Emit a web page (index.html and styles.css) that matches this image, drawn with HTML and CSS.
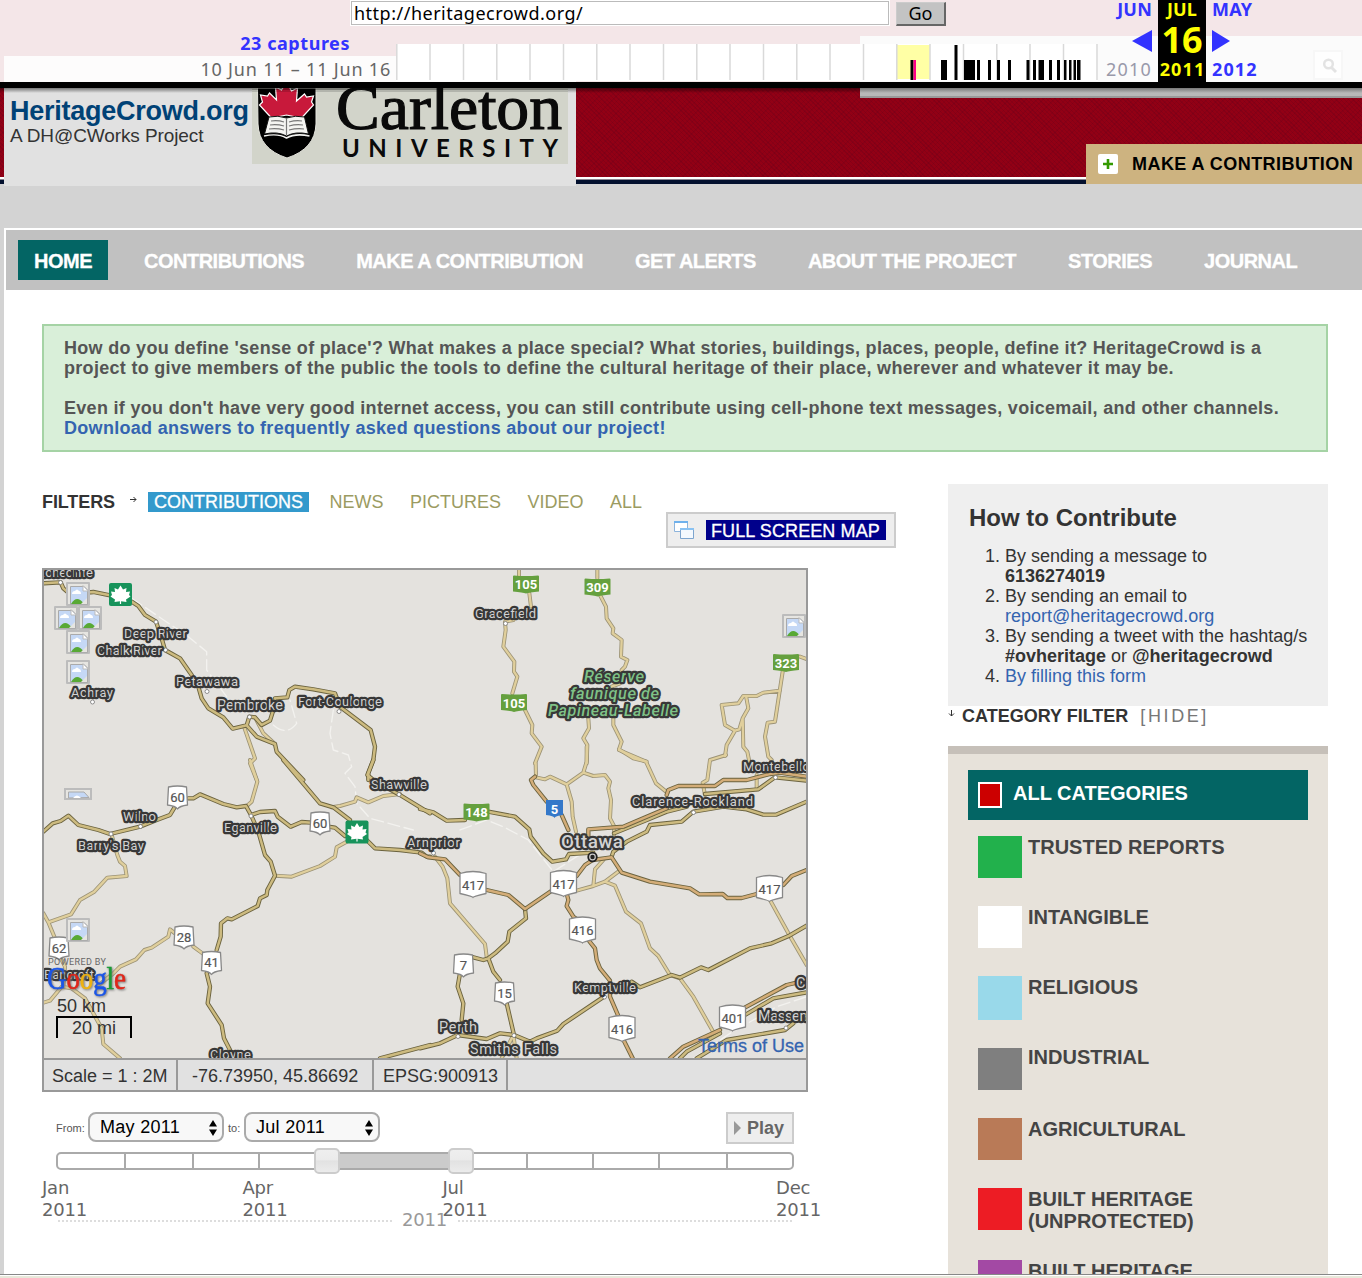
FILE: index.html
```html
<!DOCTYPE html>
<html lang="en">
<head>
<meta charset="utf-8">
<title>HeritageCrowd.org</title>
<link rel="stylesheet" href="styles.css">
</head>
<body>
<div class="archive-bar">
  <div class="archive-main">
    <form class="archive-form"><div class="url-box"><span class="url-text">http://heritagecrowd.org/</span></div><div class="go">Go</div></form>
    <div class="archive-row">
      <div class="captures"><b>23 captures</b><span>10 Jun 11 – 11 Jun 16</span></div>
      <svg class="spark" width="702" height="38" viewBox="396 44 702 38">
        <rect x="396" y="44" width="702" height="37" fill="#fff"/>
        <rect x="897" y="45" width="33" height="34" fill="#ffffa5"/>
        <path stroke="#d9d9d9" stroke-width="1.5" d="M396.8 44v36M430 44v36M463.5 44v36M496.8 44v36M530 44v36M563.5 44v36M596.8 44v36M630 44v36M663.5 44v36M696.8 44v36M730 44v36M763.5 44v36M796.8 44v36M830 44v36M863.5 44v36M896.8 44v36M930 44v36M963.5 44v36M996.8 44v36M1030 44v36M1063.5 44v36M1097 44v36"/>
        <path fill="#000" d="M910.500 60h3v20h-3zM941 60h6v20h-6zM954.500 45h3v35h-3zM964 60h11v20h-11zM977 60h3v20h-3zM988 60h3v20h-3zM997 60h3v20h-3zM1008 60h3v20h-3zM1026.500 60h3v20h-3zM1033 60h3v20h-3zM1038.500 60h5.500v20h-5.500zM1049 60h3v20h-3zM1057 60h3v20h-3zM1064 60h2.500v20h-2.500zM1069 60h2.500v20h-2.500zM1073.500 60h2.500v20h-2.500zM1077 60h3.500v20h-3.500z"/>
        <path fill="#f08" d="M913.500 60h2.500v20h-2.500z"/>
      </svg>
    </div>
  </div>
  <div class="dates">
    <div class="date prev"><b>JUN</b><svg width="20" height="22" viewBox="0 0 20 22"><path d="M20 0v22L0 11z" fill="#33f"/></svg><span>2010</span></div>
    <div class="date now"><b>JUL</b><strong>16</strong><b>2011</b></div>
    <div class="date next"><b>MAY</b><svg width="18" height="22" viewBox="0 0 18 22"><path d="M0 0v22l18-11z" fill="#33f"/></svg><b>2012</b></div>
    <div class="ghost-search"><svg width="16" height="16" viewBox="0 0 16 16"><circle cx="6.500" cy="6" r="4.300" fill="none" stroke="#e3e3e3" stroke-width="2.500"/><path d="M9.500 9.500L14 14" stroke="#e3e3e3" stroke-width="3"/></svg></div>
  </div>
</div>

<header class="banner">
  <div class="brand">
    <div class="brand-text"><h1>HeritageCrowd.org</h1><p>A DH@CWorks Project</p></div>
    <svg class="logo" width="316" height="76" viewBox="252 88 316 76">
      <rect x="252" y="88" width="316" height="76" fill="#d2d4ca"/>
      <path d="M257.500 88H316v36q-1 25-29 34-28-9-29-34z" fill="#000" stroke="#e6e6df" stroke-width="1"/>
      <path d="M286.500 82l5 9 6-3-1 13 8-7 2 3 7-1-2 6 2 3-12 13-15-3-15 3-12-13 3-3-2-7 7 1 2-3 7 7-1-13 6 3z" fill="#c8193b" stroke="#fff" stroke-width="1.200"/>
      <path d="M269 117q9-2 17.500 1 9-3 18-1l4 17q-13-3-22 2-9-5-22-2z" fill="#f4f4f1" stroke="#111" stroke-width="1"/>
      <path d="M264 136q14-3 22.500 2 9-5 23-2" fill="none" stroke="#f4f4f1" stroke-width="1.500"/>
      <path d="M286.500 118v17M271 121q7-1 13 1M270 125q7-1 14 1M269 129q8-1 15 1M289 122q7-2 13-1M289 126q7-2 14-1M289 130q8-2 15-1" fill="none" stroke="#777" stroke-width="1.200"/>
      <text class="logo-name" x="336" y="129" textLength="226" lengthAdjust="spacingAndGlyphs">Carleton</text>
      <text class="logo-univ" x="342" y="157" textLength="216">UNIVERSITY</text>
      <path d="M252 88h316v2H252z" opacity=".4"/><path d="M252 90h316v2H252z" opacity=".15"/>
    </svg>
  </div>
  <div class="searchbar"></div>
  <a class="contribute">
    <svg width="20" height="20" viewBox="0 0 20 20"><rect width="20" height="20" rx="2" fill="#fff"/><path d="M10 5v10M5 10h10" stroke="#390" stroke-width="2.600"/></svg>
    <span>MAKE A CONTRIBUTION</span>
  </a>
</header>

<div class="page">
  <nav><a class="on">HOME</a><a>CONTRIBUTIONS</a><a>MAKE A CONTRIBUTION</a><a>GET ALERTS</a><a>ABOUT THE PROJECT</a><a>STORIES</a><a>JOURNAL</a></nav>
  <div class="notice">
    <p>How do you define 'sense of place'? What makes a place special? What stories, buildings, places, people, define it? HeritageCrowd is a<br>project to give members of the public the tools to define the cultural heritage of their place, wherever and whatever it may be.</p>
    <p>Even if you don't have very good internet access, you can still contribute using cell-phone text messages, voicemail, and other channels.<br><a>Download answers to frequently asked questions about our project!</a></p>
  </div>
  <div class="columns">
    <main>
      <div class="filters">
        <strong>FILTERS</strong>
        <svg width="7" height="7" viewBox="0 0 7 7"><path d="M0 3.500h6M3.500 1L6 3.500 3.500 6" fill="none" stroke="#333"/></svg>
        <a class="on">CONTRIBUTIONS</a><a>NEWS</a><a>PICTURES</a><a>VIDEO</a><a>ALL</a>
      </div>
      <a class="fullscreen">
        <svg width="20" height="18" viewBox="0 0 20 18"><path d="M.5.500h13v10H.5z" fill="#fff" stroke="#8db4dc"/><path d="M0 0h14v2H0z" fill="#6fb1ec"/><path d="M6.500 7.500h13v10h-13z" fill="#f4f9fe" stroke="#7da5cf"/><path d="M6 7h14v2H6z" fill="#8ac2f2"/></svg>
        <span>FULL SCREEN MAP</span>
      </a>
      <div class="map">
        <svg class="canvas" width="762" height="488" viewBox="44 570 762 488">
          <defs>
            <g id="minor">
              <path transform="translate(30 470) scale(.33333)" d="M642 770L675 865 660 880 680 930M675 742L700 790 735 822"/>
              <path transform="translate(30 760) scale(.33333)" d="M660 0L682 65 665 125 648 140M735 347L785 350 870 318 915 290 920 262 950 245M905 142L930 138 975 125 980 112 1015 127 1060 108 1110 102M245 225L262 285 270 305 285 318 290 348 232 353 193 395 150 420 123 463 55 487 40 460M55 487L75 535M90 590L105 620 100 680M200 680L250 640 270 620 318 598 343 570 365 563 415 530 420 508 435 520M490 560L520 582M40 728L60 722 95 680 125 685 165 715 190 760 215 805 220 852 270 895"/>
              <path transform="translate(420 740) scale(.33333)" d="M347 70L348 112 375 118 390 110 440 133 490 98 500 65 500 20M490 98L520 108 555 105 570 125 565 145 573 180 570 235 583 260 582 285M440 133L455 185 458 230 468 275M597 30L678 65 708 130 742 158M918 45L870 60 862 120 848 128 855 165M1010 148V105M550 360L525 388 520 438M470 452L520 438 555 425 595 395M555 425L585 437 618 515 663 550 690 625 715 648 750 705 780 715 820 770 885 885M1050 480L1108 585 1160 675M45 350L68 380 82 415 90 490 195 612 200 650M280 885L290 955M280 885L245 955"/>
              <path transform="translate(420 480) scale(.33333)" d="M297 270V290M328 340L333 380M280 420L255 425 257 450 250 500 283 545 282 575 292 590 277 640M315 690L337 735 335 760 365 800 345 850M532 270V295M540 345L558 380 560 415 580 445 578 460 605 480 603 530 622 540 615 560 605 570 600 610 575 620M505 715L507 745 490 775 502 795 500 850M580 715V735L605 785 597 808 640 835 680 845M1140 530L1160 537M1088 575L1065 725 1043 728 1035 770 1045 830 1055 840M1080 632L1030 638 1010 648 970 648 955 670 905 675 915 735 945 752 920 795 915 828M945 752L958 748 968 715 985 685 978 648M968 715L970 800 982 815 988 845"/>
            </g>
            <g id="major">
              <path transform="translate(30 470) scale(.33333)" d="M40 340L92 337 100 355 120 372 150 370 190 366 240 376M305 395L325 408 345 435 378 455 395 505 405 540 450 565 485 615 505 650 515 685 535 715 580 742 608 776 650 766 658 740M650 766L680 800 735 822 740 845 820 930M658 740L675 742 695 765 720 752 730 720 735 685 772 682 778 660 795 650 850 658 915 670 930 710 1022 780 1035 830 1030 870 1015 910V930"/>
              <path transform="translate(30 760) scale(.33333)" d="M760 0L870 130 910 142 960 180M1010 240L1035 265 1110 270 1175 278 1190 290H1200M1030 0L1012 45 1030 60 1110 105 1200 160M40 215L68 190 92 183 115 167 145 195 205 210 240 222 330 200 380 180 420 165 435 140M475 115H490L510 103 580 132 620 142 648 138 663 165 685 215 705 285 722 305 735 347 712 390 710 405 690 415 683 438 605 478 592 475 573 490 572 530 560 570M540 620L530 640 540 680 533 730 575 795 582 835 605 880M663 165L690 156 735 153 743 170 782 200 815 186 845 188M895 200L915 203 945 228M1050 895L1200 855"/>
              <path transform="translate(420 740) scale(.33333)" d="M315 507L318 535 268 575 263 605 225 640 205 655 190 660 160 652M0 207L40 217 80 242 135 240M205 215L285 230 328 268 332 290 370 340 397 365 438 358 447 342 520 338M582 280L680 240 740 215 800 200M855 162L1015 148 1065 112 1160 122M575 350L580 335 620 305 680 275 690 255 785 245 820 215 910 200 980 208 1030 224H1068L1160 185M1160 557L1108 587 1055 610 990 625 865 690 843 682 780 713 755 705 660 742 635 725M205 655L220 695 240 720M260 790L282 885M120 700L113 740 130 790 125 840M0 925L60 910 113 885 200 897 240 880 282 885 330 905 350 895 412 872 430 852 552 770M780 955L800 935 900 880M830 955L920 900 1095 870 1120 850M975 825L1060 775 1160 757"/>
            </g>
            <g id="trunk">
              <path transform="translate(420 740) scale(.33333)" d="M0 340L25 352 75 358 120 405M200 450L265 465 315 507 395 452M470 408L495 375 518 360 575 352 605 398 690 425 810 445 838 463 908 462 922 474H965L1010 462M1090 435L1115 408 1160 390M440 460L445 480 440 498 460 530 470 537M505 600L525 625 530 660 540 685 570 722V770L598 835M608 895L638 955M345 110L333 120 340 135 380 185M425 225L445 270M505 290V268L610 260 740 205M740 165L745 150 775 138H885L910 120H980L1050 102 1080 98 1160 110M750 955L790 920 900 870M970 805L1100 735 1130 728"/>
            </g>
            <g id="shield3"><path d="M-13-11q13-4 26 0V9Q0 12 0 13 0 12-13 9z" fill="#fff" stroke="#888" stroke-width="1.300"/></g>
            <g id="shield2"><path d="M-9-10q9-2 18 0l1 18Q2 9 0 12-2 9-10 8z" fill="#fff" stroke="#888" stroke-width="1.300"/></g>
            <g id="green"><path d="M-13-8q0-1 1-1 12 1 24 0 1 0 1 1V7Q3 8 0 9-3 8-13 7z" fill="#65a03e"/></g>
            <g id="maple"><rect x="-11.500" y="-11.500" width="23" height="23" rx="2" fill="#17935b"/><path d="M0-9l2.500 4 3.500-1.500-.5 4 4-.5-1 3.500L10 2 5.500 5 6 7.500.6 6.800V9.500H-.6V6.800L-6 7.500-5.500 5-10 2-8.500.5-9.500-3l4 .5-.5-4L-2.500-5z" fill="#fff"/></g>
            <g id="missing"><path d="M1 1h22v22H1z" fill="#e6e5e1" stroke="#bcbcbc" stroke-width="2"/><path d="M4.500 22V4.500H18L21.500 8v14z" fill="#c5d8f5" stroke="#aaa"/><path d="M5 22q6-10 13 0z" fill="#58a935"/><path d="M15 22l6-6v6z" fill="#e6e5e1"/><path d="M6 12q0-3 3-3 2-3 4 0 2 0 2 3z" fill="#fff"/><path d="M17 4v5h5z" fill="#fff" stroke="#bbb"/></g>
          </defs>
          <rect x="44" y="570" width="762" height="488" fill="#e4e2de"/>
          <g class="border">
            <path transform="translate(30 470) scale(.33333)" d="M305 385L475 500 530 545V600L590 680M730 765Q770 800 800 760L780 690M910 720L900 790 910 840 955 855 965 890 945 910 975 950 980 1000 1020 1045 1150 1080"/>
            <path transform="translate(420 740) scale(.33333)" d="M120 270L200 240 250 260 325 300 400 395 470 350 520 325M820 955L930 880 1070 800 1160 770"/>
          </g>
          <use href="#minor" class="minor-case"/><use href="#minor" class="minor-fill"/>
          <use href="#major" class="major-case"/><use href="#major" class="major-fill"/>
          <use href="#trunk" class="major-case"/><use href="#trunk" class="trunk-fill"/>
          <g fill="#fff" stroke="#777" stroke-width=".8"><circle cx="60.500" cy="582.500" r="2"/><circle cx="156" cy="622" r="2"/><circle cx="165.500" cy="650" r="2"/><circle cx="207" cy="691.500" r="2"/><circle cx="249.500" cy="717" r="2"/><circle cx="339" cy="711.500" r="2"/><circle cx="92.500" cy="702" r="2"/><circle cx="505.500" cy="623.500" r="2"/><circle cx="399" cy="794.500" r="2"/><circle cx="251" cy="816" r="2"/><circle cx="140.500" cy="826.500" r="2"/><circle cx="111" cy="834" r="2"/><circle cx="433.500" cy="853" r="2"/><circle cx="693.500" cy="812.500" r="2"/><circle cx="775.500" cy="777.500" r="2"/><circle cx="604.500" cy="997" r="2"/><circle cx="458" cy="1036.500" r="2"/><circle cx="514" cy="1035.500" r="2"/><circle cx="786" cy="1028" r="2"/></g>
          <g class="towns">
            <text x="34" y="576.500" textLength="59">Stonecliffe</text>
            <text x="124" y="637.500" textLength="63">Deep River</text>
            <text x="97" y="655" textLength="65">Chalk River</text>
            <text x="176" y="686" textLength="62">Petawawa</text>
            <text x="217" y="710" textLength="66" class="mid">Pembroke</text>
            <text x="298" y="706" textLength="84">Fort-Coulonge</text>
            <text x="71" y="697" textLength="42">Achray</text>
            <text x="475" y="617.500" textLength="61">Gracefield</text>
            <text x="743" y="771" textLength="67">Montebello</text>
            <text x="371" y="789" textLength="56">Shawville</text>
            <text x="123" y="821" textLength="33">Wilno</text>
            <text x="224" y="831.500" textLength="53">Eganville</text>
            <text x="78" y="850" textLength="66">Barry's Bay</text>
            <text x="407" y="846.500" textLength="53">Arnprior</text>
            <text x="561" y="848" textLength="62" class="city">Ottawa</text>
            <text x="632" y="806" textLength="121">Clarence-Rockland</text>
            <text x="574" y="991.500" textLength="62">Kemptville</text>
            <text x="439" y="1031.500" textLength="38" class="mid">Perth</text>
            <text x="470" y="1053.500" textLength="87" class="mid">Smiths Falls</text>
            <text x="758" y="1021" textLength="57" class="mid">Massena</text>
            <text x="796" y="988" class="mid">Cornwall</text>
            <text x="210" y="1059" textLength="41">Cloyne</text>
            <text x="44" y="978.500" textLength="50">Bancroft</text>
          </g>
          <g class="reserve"><text x="584" y="681.500" textLength="60">Réserve</text><text x="570" y="698.500" textLength="89">faunique de</text><text x="548" y="716" textLength="130">Papineau-Labelle</text></g>
          <circle cx="592.500" cy="857" r="5.200" fill="#222"/><circle cx="592.500" cy="857" r="2.800" fill="#222" stroke="#ccc" stroke-width="1.200"/>
          <use href="#shield2" x="177.500" y="797"/><use href="#shield2" x="320" y="823"/><use href="#shield2" x="184" y="937"/><use href="#shield2" x="59" y="948"/><use href="#shield2" x="211.500" y="962.500"/><use href="#shield2" x="463.500" y="965"/><use href="#shield2" x="504.500" y="993"/>
          <use href="#shield3" x="473" y="884.500"/><use href="#shield3" x="563.500" y="883.500"/><use href="#shield3" x="769.500" y="888.500"/><use href="#shield3" x="582.500" y="930"/><use href="#shield3" x="622" y="1028.500"/><use href="#shield3" x="732.500" y="1018"/>
          <g class="route"><text x="177.500" y="801.500">60</text><text x="320" y="827.500">60</text><text x="184" y="941.500">28</text><text x="59" y="952.500">62</text><text x="211.500" y="967">41</text><text x="463.500" y="970">7</text><text x="504.500" y="998">15</text><text x="473" y="889.500">417</text><text x="563.500" y="888.500">417</text><text x="769.500" y="893.500">417</text><text x="582.500" y="935">416</text><text x="622" y="1033.500">416</text><text x="732.500" y="1023">401</text></g>
          <use href="#green" x="526" y="584.500"/><use href="#green" x="597.500" y="587.500"/><use href="#green" x="514" y="703"/><use href="#green" x="786" y="663"/><use href="#green" x="476.500" y="812.500"/>
          <path d="M546 800h17v15q-8 1-8.500 3-.5-2-8.500-3z" fill="#3478c9"/>
          <g class="route white"><text x="526" y="589">105</text><text x="597.500" y="592">309</text><text x="514" y="707.500">105</text><text x="786" y="667.500">323</text><text x="476.500" y="817">148</text><text x="554.500" y="813.500">5</text></g>
          <use href="#maple" x="120.500" y="594.500"/><use href="#maple" x="357" y="832"/>
          <use href="#missing" x="66" y="582"/><use href="#missing" x="54" y="606"/><use href="#missing" x="78" y="606"/><use href="#missing" x="66" y="630"/><use href="#missing" x="66" y="660"/><use href="#missing" x="782" y="614"/><use href="#missing" x="66" y="918"/>
          <path d="M65 789h26v10H65z" fill="#e6e5e1" stroke="#bcbcbc" stroke-width="2"/><path d="M68.500 798v-6H84l5 5.500z" fill="#c5d8f5" stroke="#aaa"/><path d="M73 798q4-5 8 0z" fill="#fff"/>
          <text class="powered" x="48" y="965" textLength="58">POWERED BY</text>
          <text class="google" x="47" y="989" textLength="79" lengthAdjust="spacingAndGlyphs"><tspan fill="#1a55e8" stroke="#1a55e8">G</tspan><tspan fill="#e0261a" stroke="#e0261a">o</tspan><tspan fill="#eeb211" stroke="#eeb211">o</tspan><tspan fill="#1a55e8" stroke="#1a55e8">g</tspan><tspan fill="#1b9b36" stroke="#1b9b36">l</tspan><tspan fill="#e0261a" stroke="#e0261a">e</tspan></text>
          <text class="scale-text" x="57" y="1012" textLength="49">50 km</text><text class="scale-text" x="72" y="1034" textLength="44">20 mi</text>
          <path d="M57 1038v-21h74v21" fill="none" stroke="#000" stroke-width="2"/>
          <text class="terms" x="698" y="1052" textLength="106">Terms of Use</text>
        </svg>
        <div class="status"><span class="c1">Scale = 1 : 2M</span><span class="c2">-76.73950, 45.86692</span><span class="c3">EPSG:900913</span></div>
      </div>
      <div class="range">
        <label>From:</label><div class="select">May 2011<svg width="10" height="16" viewBox="0 0 10 16"><path d="M1 6.500h8L5 0zM1 9.500h8L5 16z"/></svg></div>
        <label>to:</label><div class="select">Jul 2011<svg width="10" height="16" viewBox="0 0 10 16"><path d="M1 6.500h8L5 0zM1 9.500h8L5 16z"/></svg></div>
        <div class="play"><svg width="7" height="14" viewBox="0 0 7 14"><path d="M0 0l7 7-7 7z" fill="#999"/></svg>Play</div>
      </div>
      <svg class="slider" width="742" height="28" viewBox="54 1147 742 28">
        <defs><linearGradient id="knob" x2="0" y2="1"><stop offset="0" stop-color="#efefef"/><stop offset=".45" stop-color="#ebebeb"/><stop offset=".5" stop-color="#e2e2e2"/><stop offset="1" stop-color="#ececec"/></linearGradient></defs>
        <rect x="57" y="1153" width="736" height="16" rx="4" fill="#fff" stroke="#aaa" stroke-width="2"/>
        <path d="M125 1154v15M193 1154v15M259 1154v15M527 1154v15M593 1154v15M659 1154v15M727 1154v15" stroke="#aaa" stroke-width="2"/>
        <path d="M327 1154h134v14H327z" fill="#cbcbcb"/>
        <rect x="315" y="1149" width="24" height="24" rx="4" fill="url(#knob)" stroke="#ccc" stroke-width="2"/><rect x="449" y="1149" width="24" height="24" rx="4" fill="url(#knob)" stroke="#ccc" stroke-width="2"/>
      </svg>
      <div class="months"><span>Jan<br>2011</span><span>Apr<br>2011</span><span>Jul<br>2011</span><span>Dec<br>2011</span></div>
      <div class="year"><i></i><span>2011</span><i></i></div>
    </main>
    <aside>
      <section class="how">
        <h2>How to Contribute</h2>
        <ol><li>By sending a message to<br><b>6136274019</b></li><li>By sending an email to<br><a>report@heritagecrowd.org</a></li><li>By sending a tweet with the hashtag/s<br><b>#ovheritage</b> or <b>@heritagecrowd</b></li><li><a>By filling this form</a></li></ol>
      </section>
      <div class="cat-title"><svg width="7" height="7" viewBox="0 0 7 7"><path d="M3.500 0v6M1 3.500L3.500 6 6 3.500" fill="none" stroke="#333"/></svg><b>CATEGORY FILTER</b><span>[HIDE]</span></div>
      <div class="cats">
        <div class="all"><i></i><span>ALL CATEGORIES</span></div>
        <div class="cat"><i style="background:#22b14c"></i><span>TRUSTED REPORTS</span></div>
        <div class="cat"><i style="background:#fff"></i><span>INTANGIBLE</span></div>
        <div class="cat tall"><i style="background:#99d9ea"></i><span>RELIGIOUS</span></div>
        <div class="cat raised"><i style="background:#7f7f7f"></i><span>INDUSTRIAL</span></div>
        <div class="cat"><i style="background:#b97a57"></i><span>AGRICULTURAL</span></div>
        <div class="cat tall2"><i style="background:#ed1c24"></i><span>BUILT HERITAGE<br>(UNPROTECTED)</span></div>
        <div class="cat"><i style="background:#a349a4"></i><span>BUILT HERITAGE</span></div>
      </div>
    </aside>
  </div>
</div>
<footer class="edge"></footer>
</body>
</html>
```

FILE: styles.css
```css
* { box-sizing: border-box; }
html, body { margin: 0; height: 1278px; overflow: hidden; }
body { background: #d3d3d3; font: 18px/20px "Liberation Sans", Arial, sans-serif; color: #333; }
h1, h2, p, ol { margin: 0; padding: 0; }
a { color: #3464b0; }

/* archive toolbar */
.archive-bar {
  display: flex; height: 88px; border-bottom: 6px solid #000;
  font-family: "Noto Sans", sans-serif; font-size: 18px; line-height: 22px;
  background:
    linear-gradient(#fbfbfb, #fbfbfb) 860px 36px / 502px 46px no-repeat,
    linear-gradient(#fdfcfc, #fdfcfc) 4px 56px / 572px 26px no-repeat,
    #f4e6e8;
}
.archive-main { width: 1098px; flex: none; }
.archive-form { display: flex; height: 26px; margin: 0 0 18px; padding-left: 350px; }
.url-box { width: 540px; height: 26px; border: 1px solid #fff; outline: 1px solid #bbb; outline-offset: -2px; background: #fff; padding: 0 0 0 3px; color: #000; }
.url-text { display: block; line-height: 24px; letter-spacing: .5px; }
.go { width: 50px; height: 24px; margin: 2px 0 0 6px; background: #c3c3c3; border: solid #ccc; border-width: 1px 2px 2px 1px; border-right-color: #666; border-bottom-color: #666; color: #000; text-align: center; line-height: 21px; }
.archive-row { display: flex; height: 38px; }
.captures { width: 396px; padding-right: 5px; text-align: right; margin-top: -14px; display: flex; flex-direction: column; line-height: 26px; color: #666; letter-spacing: .8px; }
.captures b { color: #33f; padding-right: 41px; letter-spacing: .55px; }
.spark { display: block; flex: none; }
.dates { display: flex; flex: 1; }
.date { display: flex; flex-direction: column; height: 82px; position: relative; }
.date b { color: #33f; line-height: 18px; height: 20px; letter-spacing: .2px; }
.date svg { margin: 10px 0; }
.prev { width: 60px; padding-right: 6px; align-items: flex-end; }
.prev span { color: #99a; line-height: 14px; letter-spacing: 1.2px; }
.now { width: 48px; background: #000; align-items: center; }
.now b, .now strong { color: #ff0; }
.now strong { font-size: 36px; line-height: 40px; }
.next { padding-left: 6px; width: 107px; }
.next b:last-child { line-height: 14px; letter-spacing: 1.1px; }
.now b:last-child { line-height: 18px; letter-spacing: 1.1px; padding-left: 1px; }
.ghost-search { width: 30px; height: 30px; margin-top: 50px; margin-left: 0; border: 2px solid #f7f7f7; background: #fefefe; padding: 6px 7px; }
.ghost-search svg { display: block; }

/* banner */
.banner {
  display: flex; height: 98px; padding-left: 4px;
  background:
    linear-gradient(rgba(0,0,0,.5), transparent) 0 0 / 100% 5px no-repeat,
    repeating-linear-gradient(45deg, rgba(60,0,30,.14) 0 1px, transparent 1px 3px) 0 0 / 100% 89px no-repeat,
    repeating-linear-gradient(-45deg, rgba(60,0,30,.1) 0 1px, transparent 1px 4px) 0 0 / 100% 89px no-repeat,
    linear-gradient(#920015 0 89px, #fff 89px 91px, #8c8490 91px 92px, #03102e 92px 96px, #d3d3d3 96px);
}
.brand { width: 572px; flex: none; display: flex; height: 98px; background: linear-gradient(#777, #e1e1e1 5px); }
.brand-text { width: 248px; padding: 8px 0 0 6px; white-space: nowrap; }
.brand h1 { font-size: 27px; line-height: 30px; color: #004276; letter-spacing: -.25px; }
.brand p { font-size: 19px; line-height: 19px; letter-spacing: -.1px; }
.logo { display: block; flex: none; }
.logo-name { font: 63px "Liberation Serif", serif; fill: #0a0a0a; stroke: #0a0a0a; stroke-width: 1.2; }
.logo-univ { font: bold 24px Lato, sans-serif; fill: #0a0a0a; }
.searchbar { flex: 1; height: 10px; margin-left: 284px; margin-right: -276px; background: linear-gradient(#777, #b8b8b8 5px, #b8b8b8 8px, #999 8px); }
.contribute { width: 276px; height: 40px; margin-top: 56px; background: #cdb380; display: flex; align-items: center; padding-left: 12px; gap: 14px; color: #000; font-weight: bold; white-space: nowrap; flex: none; letter-spacing: .45px; }
.contribute span { margin-top: -1px; }

/* page */
.page { margin: 42px 0 0 4px; height: 1046px; overflow: hidden; background: #fff; padding: 2px 0 0 2px; }
nav { height: 60px; background: #c1c1c1; padding: 10px 12px; display: flex; gap: 20px; }
nav a { height: 40px; line-height: 43px; padding: 0 16px; color: #fff; font-size: 20px; font-weight: bold; letter-spacing: -.5px; white-space: nowrap; -webkit-text-stroke: .3px #fff; }
nav a.on { background: #036564; width: 90px; }
.notice { margin: 34px 34px 0 36px; height: 128px; border: 2px solid #a5d3a5; background: #d9efd9; padding: 12px 20px; font-weight: bold; color: #555; white-space: nowrap; letter-spacing: .302px; }
.notice p + p { margin-top: 20px; }
.columns { display: flex; justify-content: space-between; margin: 32px 34px 0 36px; }
main { width: 800px; }
.filters { display: flex; align-items: center; height: 20px; margin-top: 8px; }
.filters strong { letter-spacing: -.1px; }
.filters svg { margin: -6px 11px 0 15px; }
.filters a { color: #9b9b61; margin-left: 20px; }
.filters a + a { margin-left: 26.5px; }
.filters a.on { background: #3399cc; color: #fff; margin: 0 -6.500px 0 0; padding: 0 6.500px 0 6px; -webkit-text-stroke: .3px #fff; }
.fullscreen { display: flex; width: 230px; height: 36px; margin-left: 624px; border: 2px solid #ccc; background: #eee; padding: 6px 0 0 6px; }
.fullscreen svg { margin: 1px 12px 0 0; }
.fullscreen span { background: #00008b; color: #fff; width: 180px; height: 20px; line-height: 22px; padding-left: 5px; letter-spacing: .1px; -webkit-text-stroke: .3px #fff; white-space: nowrap; }
.map { width: 766px; height: 524px; margin-top: 20px; border: 2px solid #999; }
.canvas { display: block; font-family: Roboto, sans-serif; }
.canvas use, .border { fill: none; stroke-linejoin: round; stroke-linecap: round; }
.border { stroke: #f3f2ef; stroke-width: 4; stroke-dasharray: 36 14; }
.minor-case { stroke: #9c9376; stroke-width: 12; }
.minor-fill { stroke: #e0cf9c; stroke-width: 7; }
.major-case { stroke: #6b633f; stroke-width: 13; }
.major-fill { stroke: #cdbb80; stroke-width: 7.500; }
.trunk-fill { stroke: #d4ad78; stroke-width: 7.500; }
.towns text { font-size: 13px; fill: #d2d2d2; stroke: #383838; stroke-width: 4.500px; paint-order: stroke; stroke-linejoin: round; }
.towns .mid { font-size: 14.500px; }
.towns .city { font-size: 19px; font-weight: 500; }
.reserve text { font-size: 16.500px; font-style: italic; font-weight: 500; fill: #7fc287; stroke: #383838; stroke-width: 4.500px; paint-order: stroke; stroke-linejoin: round; }
.route { font-size: 13px; fill: #555; text-anchor: middle; stroke: #555; stroke-width: .2; }
.route.white { fill: #fff; font-weight: 700; stroke: none; }
.powered { font-size: 9px; fill: #666; }
.google { font: 31px "Liberation Serif", serif; stroke-width: .6; filter: drop-shadow(1px 1px 1px #777); }
.scale-text { font: 18px "Liberation Sans", sans-serif; fill: #333; }
.terms { font: 18px "Liberation Sans", sans-serif; fill: #3464b0; stroke: #3464b0; stroke-width: .3; }
.status { display: flex; height: 32px; border-top: 2px solid #999; background: #e1e1e1; line-height: 32px; white-space: nowrap; }
.status span { border-right: 2px solid #999; padding-left: 8px; }
.status .c1 { width: 134px; }
.status .c2 { width: 196px; padding-left: 14px; }
.status .c3 { width: 134px; padding-left: 9px; }

.range { display: flex; height: 32px; width: 752px; margin: 20px 0 3px; padding-left: 14px; }
.range label { font-size: 11px; line-height: 32px; width: 32px; color: #555; }
.select { width: 136px; height: 30px; border: 2px solid #aaa; border-radius: 8px; background: #f8f8f8; color: #000; display: flex; justify-content: space-between; padding: 1px 4px 0 10px; line-height: 27px; align-items: center; letter-spacing: .3px; }
.select + label { width: 16px; margin-left: 4px; }
.play { width: 68px; height: 32px; border: 2px solid #ccc; background: #eee; font-weight: bold; color: #666; margin-left: auto; line-height: 28px; display: flex; align-items: center; gap: 6px; padding-left: 6px; }
.slider { display: block; margin-left: 12px; }
.months { display: grid; grid-template-columns: 200.500px 200px 333.500px 60px; font: 18px/22px "DejaVu Sans", sans-serif; color: #666; margin-top: 2px; height: 44px; letter-spacing: -.2px; }
.year { display: flex; align-items: center; width: 750px; height: 20px; margin-top: -10px; padding-left: 16px; font: 18px/20px "DejaVu Sans", sans-serif; color: #999; }
.year i { flex: 1; border-top: 2px dotted #ddd; }
.year span { width: 66px; padding-left: 10px; letter-spacing: -.2px; margin-top: -3px; }

aside { width: 380px; flex: none; white-space: nowrap; }
.how { height: 222px; background: #efefef; padding: 20px; }
.how h2 { font-size: 24px; line-height: 28px; margin-bottom: 14px; padding-left: 1px; }
.how ol { padding-left: 37px; }
.cat-title { display: flex; height: 20px; }
.cat-title svg { margin: 4px 7px 0 0; }
.cat-title span { margin-left: 12px; letter-spacing: 2.600px; color: #777; }
.cats { margin-top: 20px; border-top: 8px solid #c6c0b9; background: #e7e2da; height: 540px; padding: 16px 20px; font-size: 20px; line-height: 22px; font-weight: bold; }
.all { display: flex; align-items: center; height: 50px; background: #036564; color: #fff; padding-left: 10px; margin-bottom: 16px; }
.all i { width: 24px; height: 26px; border: 2px solid #fff; background: #c00; margin-right: 11px; }
.all span { margin-top: -4px; }
.cat { display: flex; height: 70px; padding-left: 10px; color: #444; }
.cat i { width: 44px; height: 42px; margin-right: 6px; }
.tall, .tall2 { height: 72px; }
.tall i { height: 44px; }
.raised span { margin-top: -2px; }
.edge { height: 4px; border-top: 1px solid #888; background: linear-gradient(#fff 1px, #e8e8da 1px); }
```
